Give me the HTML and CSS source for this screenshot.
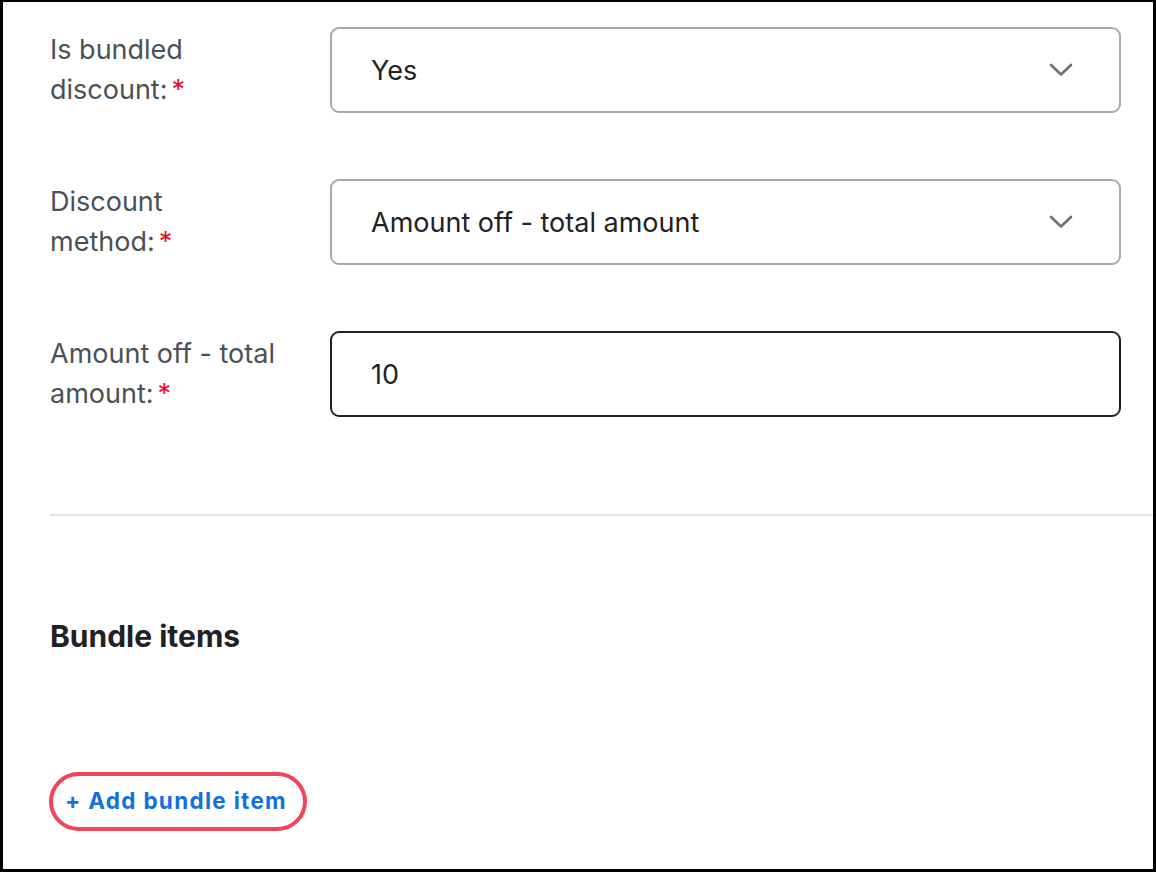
FILE: index.html
```html
<!DOCTYPE html>
<html lang="en">
<head>
    <meta charset="UTF-8">
    <meta name="viewport" content="width=device-width, initial-scale=1.0">
    <title>Bundled discount</title>
    <link rel="stylesheet" href="styles.css">
</head>
<body>
    <div class="frame">
        <div class="form">
            <div class="field">
                <label class="field-label">Is bundled discount:<span class="req">*</span></label>
                <div class="select">
                    <span>Yes</span>
                    <svg class="chevron" width="24" height="14" viewBox="0 0 24 14"><path d="M2 2 L12 11.5 L22 2" fill="none" stroke="#6b7176" stroke-width="2.6" stroke-linecap="round" stroke-linejoin="round"/></svg>
                </div>
            </div>
            <div class="field">
                <label class="field-label">Discount method:<span class="req">*</span></label>
                <div class="select">
                    <span>Amount off - total amount</span>
                    <svg class="chevron" width="24" height="14" viewBox="0 0 24 14"><path d="M2 2 L12 11.5 L22 2" fill="none" stroke="#6b7176" stroke-width="2.6" stroke-linecap="round" stroke-linejoin="round"/></svg>
                </div>
            </div>
            <div class="field">
                <label class="field-label">Amount off - total amount:<span class="req">*</span></label>
                <input class="text-input" type="text" value="10">
            </div>
        </div>
        <hr class="divider">
        <div class="bundle">
            <h2>Bundle items</h2>
            <button class="add-button">+ Add bundle item</button>
        </div>
    </div>
</body>
</html>
```

FILE: styles.css
```css
html, body {
    margin: 0;
    height: 100%;
}
body {
    font-family: Inter, "Open Sans", sans-serif;
    background-color: #fff;
    color: #202124;
}
.frame {
    box-sizing: border-box;
    height: 872px;
    border-style: solid;
    border-color: #000;
    border-width: 2px 3px 3px 3px;
    padding-left: 47px;
    overflow: hidden;
}
.form {
    display: flex;
    flex-direction: column;
    gap: 66px;
    padding-top: 25px;
    margin-right: 32px;
}
.field {
    display: flex;
    align-items: center;
    gap: 44px;
}
.field-label {
    width: 236px;
    flex: none;
    font-size: 27px;
    line-height: 40px;
    color: #4a5156;
}
.req {
    color: #e8101f;
    padding-left: 4px;
}
.select, .text-input {
    box-sizing: border-box;
    flex: 1;
    height: 86px;
    border-radius: 9px;
    padding: 0 46px 0 39px;
    font-family: inherit;
    font-size: 27px;
    color: #202124;
    background: #fff;
}
.select {
    display: flex;
    align-items: center;
    justify-content: space-between;
    border: 2px solid #a3a9ac;
}
.text-input {
    border: 2px solid #202124;
    outline: none;
    margin: 0;
    width: 100%;
}
.divider {
    margin: 97px 0 0 0;
    border: none;
    border-top: 2px solid #e2e2e2;
}
.bundle {
    padding-top: 100px;
}
.bundle h2 {
    margin: 0;
    font-size: 30px;
    line-height: 40px;
    font-weight: 700;
    color: #1f2124;
}
.add-button {
    margin-top: 116px;
    margin-left: -1px;
    background: #fff;
    border: 4px solid #f2435b;
    border-radius: 30px;
    padding: 10px 16px 11px 12px;
    font-family: inherit;
    font-size: 22.5px;
    line-height: 30px;
    font-weight: 700;
    letter-spacing: 1.3px;
    color: #1270e0;
    cursor: pointer;
}
```
